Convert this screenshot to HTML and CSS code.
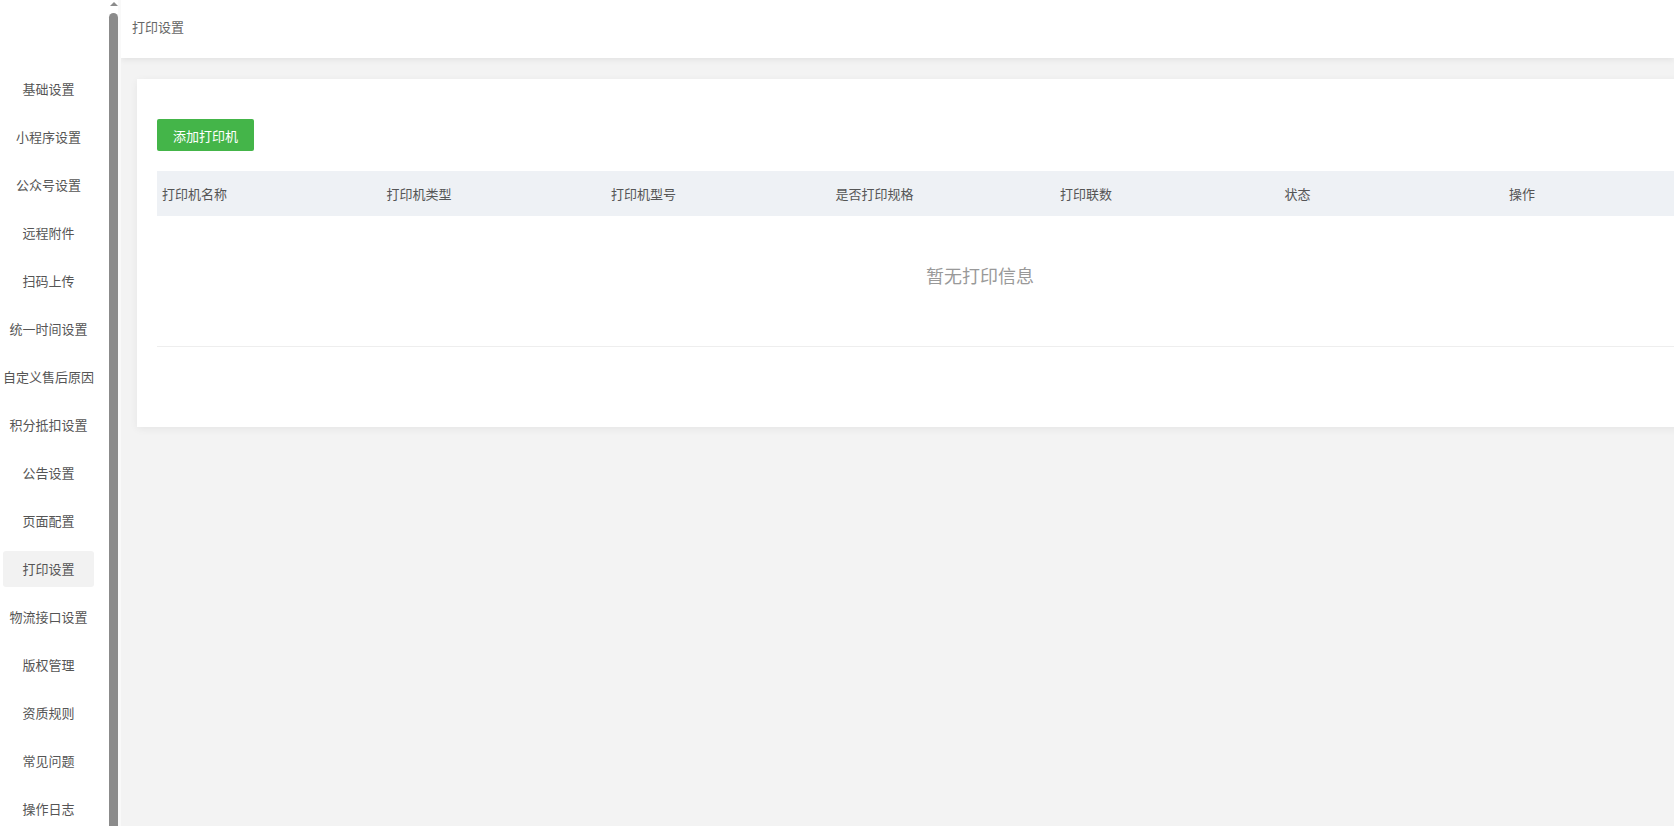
FILE: index.html
```
<!DOCTYPE html>
<html lang="zh-CN">
<head>
    <meta charset="UTF-8">
    <meta name="viewport" content="width=device-width, initial-scale=1.0">
    <title>打印设置</title>
    <link rel="stylesheet" href="styles.css">
</head>
<body>
    <div class="sidebar">
        <ul class="side-menu">
            <li class="menu-item">基础设置</li>
            <li class="menu-item">小程序设置</li>
            <li class="menu-item">公众号设置</li>
            <li class="menu-item">远程附件</li>
            <li class="menu-item">扫码上传</li>
            <li class="menu-item">统一时间设置</li>
            <li class="menu-item">自定义售后原因</li>
            <li class="menu-item">积分抵扣设置</li>
            <li class="menu-item">公告设置</li>
            <li class="menu-item">页面配置</li>
            <li class="menu-item active">打印设置</li>
            <li class="menu-item">物流接口设置</li>
            <li class="menu-item">版权管理</li>
            <li class="menu-item">资质规则</li>
            <li class="menu-item">常见问题</li>
            <li class="menu-item">操作日志</li>
        </ul>
        <div class="side-scroll">
            <div class="scroll-arrow"></div>
            <div class="scroll-thumb"></div>
        </div>
    </div>

    <div class="main">
        <div class="header">打印设置</div>

        <div class="content">
            <div class="card">
                <button class="add-btn">添加打印机</button>

                <table class="print-table">
                    <colgroup>
                        <col class="col">
                        <col class="col">
                        <col class="col">
                        <col class="col">
                        <col class="col">
                        <col class="col">
                        <col class="col-last">
                    </colgroup>
                    <thead>
                        <tr>
                            <th>打印机名称</th>
                            <th>打印机类型</th>
                            <th>打印机型号</th>
                            <th>是否打印规格</th>
                            <th>打印联数</th>
                            <th>状态</th>
                            <th>操作</th>
                        </tr>
                    </thead>
                    <tbody>
                        <tr>
                            <td class="empty" colspan="7">暂无打印信息</td>
                        </tr>
                    </tbody>
                </table>
            </div>
        </div>
    </div>
</body>
</html>
```

FILE: styles.css
```
:root {
    --green: #44b549;
    --bg: #f3f3f3;
    --text: #555555;
    --thumb: #8b8b8b;
}

body {
    margin: 0;
    height: 100vh;
    display: flex;
    overflow: hidden;
    background: var(--bg);
    font-family: "Noto Sans CJK SC", "Microsoft YaHei", sans-serif;
    font-size: 13px;
    color: var(--text);
}

.sidebar {
    display: flex;
    flex-shrink: 0;
    background: #ffffff;
    border-right: 3px solid #f9f9f9;
}

.side-menu {
    display: flex;
    flex-direction: column;
    width: 97px;
    list-style: none;
    margin: 0 12px 0 0;
    padding: 65px 0 0 0;
}

.menu-item {
    height: 36px;
    line-height: 36px;
    margin: 6px 3px;
    text-align: center;
    white-space: nowrap;
    border-radius: 3px;
    color: var(--text);
}

.menu-item.active {
    background: #f2f2f2;
}

.side-scroll {
    width: 9px;
    display: flex;
    flex-direction: column;
    align-items: center;
}

.scroll-arrow {
    width: 0;
    height: 0;
    margin-top: 2px;
    border-left: 4px solid transparent;
    border-right: 4px solid transparent;
    border-bottom: 4px solid var(--thumb);
}

.scroll-thumb {
    flex: 1;
    width: 9px;
    margin-top: 7px;
    background: var(--thumb);
    border-radius: 5px 5px 0 0;
}

.main {
    flex: 1;
    min-width: 0;
    overflow: hidden;
}

.header {
    height: 58px;
    line-height: 54px;
    padding-left: 11px;
    background: #ffffff;
    color: #666666;
    box-shadow: 0 2px 6px rgba(0, 0, 0, 0.07);
    position: relative;
}

.content {
    padding: 21px 0 0 16px;
}

.card {
    width: 1686px;
    box-sizing: border-box;
    padding: 40px 20px 80px 20px;
    background: #ffffff;
    box-shadow: 0 2px 8px rgba(0, 0, 0, 0.06);
}

.add-btn {
    display: block;
    height: 32px;
    padding: 0 16px;
    border: none;
    border-radius: 2px;
    background: var(--green);
    color: #ffffff;
    font-family: inherit;
    font-size: 13px;
    margin-bottom: 20px;
    cursor: pointer;
}

.print-table {
    width: 1646px;
    table-layout: fixed;
    border-collapse: collapse;
}

.col {
    width: 224.5px;
}

.print-table th {
    height: 45px;
    padding: 0 5px;
    background: #eef1f5;
    text-align: left;
    font-weight: normal;
    color: var(--text);
}

.print-table .empty {
    padding: 47px 0 59px 0;
    line-height: 24px;
    text-align: center;
    font-size: 18px;
    color: #999999;
    border-bottom: 1px solid #eeeeee;
}
```
